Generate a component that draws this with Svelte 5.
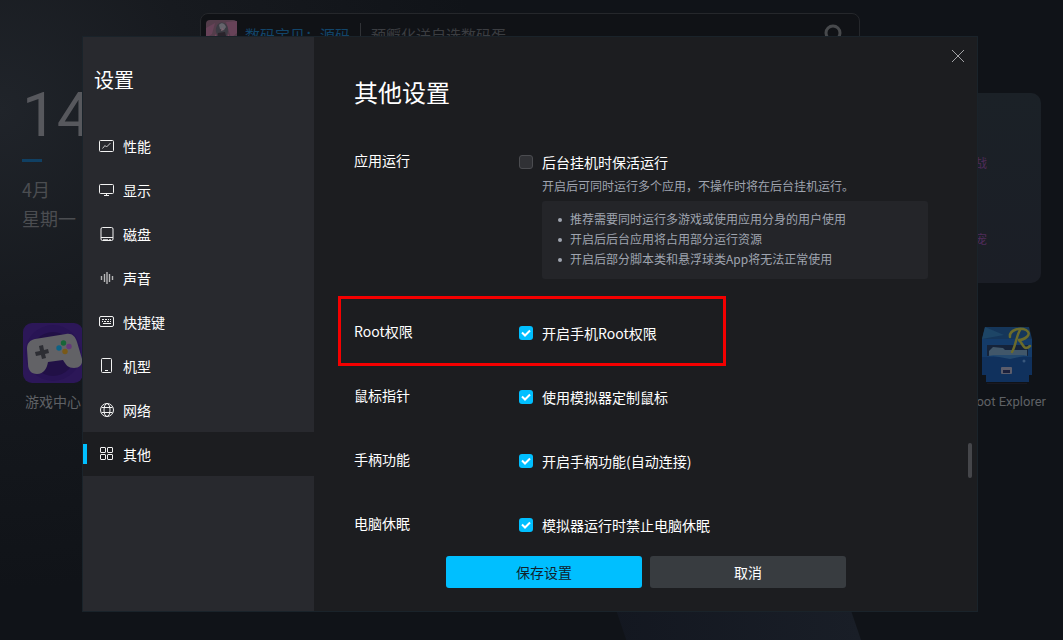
<script lang="ts">
    let active = $state("other");

    const menu = [
        { id: "performance", label: "性能" },
        { id: "display", label: "显示" },
        { id: "disk", label: "磁盘" },
        { id: "sound", label: "声音" },
        { id: "hotkey", label: "快捷键" },
        { id: "model", label: "机型" },
        { id: "network", label: "网络" },
        { id: "other", label: "其他" },
    ];

    let settings = $state([
        {
            id: "keepalive",
            title: "应用运行",
            option: "后台挂机时保活运行",
            checked: false,
            hint: "开启后可同时运行多个应用，不操作时将在后台挂机运行。",
            notes: [
                "推荐需要同时运行多游戏或使用应用分身的用户使用",
                "开启后后台应用将占用部分运行资源",
                "开启后部分脚本类和悬浮球类App将无法正常使用",
            ],
        },
        { id: "root", title: "Root权限", option: "开启手机Root权限", checked: true, marked: true },
        { id: "cursor", title: "鼠标指针", option: "使用模拟器定制鼠标", checked: true },
        { id: "gamepad", title: "手柄功能", option: "开启手柄功能(自动连接)", checked: true },
        { id: "sleep", title: "电脑休眠", option: "模拟器运行时禁止电脑休眠", checked: true },
    ]);
</script>

{#snippet icon(id)}
    <svg class="icon" viewBox="0 0 16 16" width="16" height="16" aria-hidden="true">
        {#if id === "performance"}
            <rect x="0.5" y="2.5" width="14" height="11" rx="1" />
            <path d="M3.5 10.5 6 7.5 7.5 9 11.5 5" stroke-width="0.8" />
        {:else if id === "display"}
            <rect x="0.5" y="2.5" width="14" height="9" rx="1" />
            <path d="M7.5 11.5v2M5 13.5h5" />
        {:else if id === "disk"}
            <rect x="2" y="1.5" width="12" height="13" rx="1.5" />
            <path d="M2 11.5h12" />
            <path d="M4 13.5h5M10 13.5h2" stroke-width="0.7" />
        {:else if id === "sound"}
            <path d="M2.5 6v4M5.5 4v8M8 2v12M10.5 4v8M13.5 6v4" stroke-width="1.4" opacity="0.7" />
        {:else if id === "hotkey"}
            <rect x="0.5" y="2.5" width="14" height="10" rx="1.5" />
            <path d="M3 5.5h2M6 5.5h2M9 5.5h1M11 5.5h1M3 7.5h1M5 7.5h2M8 7.5h2M11 7.5h1M4 9.5h8" />
        {:else if id === "model"}
            <rect x="2.5" y="0.5" width="10" height="14" rx="1" />
            <path d="M6 12.5h3" />
        {:else if id === "network"}
            <circle cx="8" cy="8" r="6.5" />
            <ellipse cx="8" cy="8" rx="3" ry="6.5" />
            <path d="M2.5 5.5h11M2.5 10.5h11" />
        {:else}
            <rect x="1.5" y="1.5" width="5" height="5" rx="0.5" />
            <rect x="8.5" y="1.5" width="5" height="5" rx="0.5" />
            <rect x="1.5" y="8.5" width="5" height="5" rx="0.5" />
            <rect x="8.5" y="8.5" width="5" height="5" rx="0.5" />
        {/if}
    </svg>
{/snippet}

<div class="desktop">
    <div class="searchBar">
        <svg class="avatar" viewBox="0 0 31 31" width="31" height="31" aria-hidden="true">
            <rect width="31" height="31" rx="4" fill="#543d4b" />
            <path d="M0 8 9 3 6 14 0 18zM20 2l11-1v12l-6 5z" fill="#674258" />
            <path d="M2 25 10 14l3 14zM22 14l8 12-9 2z" fill="#764860" />
            <path d="M10 12C9 5 14 1 18 3c5 2 5 9 2 14l-7 1z" fill="#3b3b43" />
            <path d="M13 5c2-3 6-2 7 2l-2 3-4-1z" fill="#65646c" />
            <path d="m12 13 7-1 2 8-10 1z" fill="#29232b" />
            <path d="m16 7 2 3-3 1z" fill="#7b6470" />
        </svg>
        <span class="adName">数码宝贝：源码</span>
        <span class="adText">预孵化送自选数码蛋</span>
        <svg class="magnifier" viewBox="0 0 24 24" width="24" height="24" aria-hidden="true">
            <circle cx="12" cy="10" r="7" />
            <path d="m17 15 6 6" />
        </svg>
    </div>

    <div class="date">
        <div class="day">14</div>
        <div class="dash"></div>
        <div>4月</div>
        <div>星期一</div>
    </div>

    <div class="card">
        <span>战</span>
        <span>宠</span>
    </div>

    <div class="shortcut games">
        <svg viewBox="0 0 60 60" width="60" height="60" aria-hidden="true">
            <rect width="60" height="60" rx="9" fill="#2c1758" />
            <circle cx="30" cy="30" r="28" fill="#281454" />
            <circle cx="30" cy="31" r="22" fill="#211046" />
            <path
                d="M12 16 43 11c6-1 9 2 11 8l5 17c1 6-3 9-8 9-6 0-8-3-11-8l-15 2c-1 6-4 12-11 12-6 0-9-4-9-10L4 26c0-6 3-9 8-10z"
                fill="#626266"
            />
            <path d="m16 23 4-1 1 5 4-1 1 4-4 1 1 4-4 1-1-4-5 1-1-4 5-1z" fill="#2d2e34" />
            <circle cx="40.5" cy="20" r="2.7" fill="#176638" />
            <circle cx="46" cy="23.5" r="2.7" fill="#643879" />
            <circle cx="36" cy="25" r="2.7" fill="#0d6285" />
            <circle cx="42" cy="28.5" r="2.7" fill="#795918" />
        </svg>
        <span>游戏中心</span>
    </div>

    <div class="shortcut explorer">
        <svg viewBox="0 0 60 60" width="60" height="60" aria-hidden="true">
            <path d="M8 3h44l3 12H5z" fill="#15365a" />
            <path d="m8 3 19 8-22 4z" fill="#1d4566" />
            <path d="M5 15h50v36h-3v7H9v-7H5z" fill="#143b69" />
            <path d="M5 33h50v18h-3v7H9v-7H5z" fill="#10315d" />
            <path d="M10 21h41v11H10z" fill="#15233a" />
            <path d="m12 27 4-4 10 1 2 2h22v6H12z" fill="#41576a" />
            <path d="M11 31h40l-18 4z" fill="#24496e" />
            <rect x="24" y="43" width="11" height="7" rx="1" fill="#5c5d6b" />
            <path d="M26 46h7v3h-7z" fill="#1b203c" />
            <circle cx="47" cy="37" r="1.5" fill="#38577c" />
            <path
                d="M33 13c-1-7 10-10 16-7 7 4-1 10-8 10 3 0 5 8 8 8 2 0 3-1 4-2M43 6c-4 7-4 15-8 22"
                fill="none"
                stroke="#6b6b2b"
                stroke-width="2.5"
                stroke-linecap="round"
            />
            <path d="M10 60h40" stroke="#24212b" />
        </svg>
        <span>Root Explorer</span>
    </div>

    <div class="dialog" role="dialog" aria-labelledby="pageTitle">
        <nav class="sidebar">
            <h1>设置</h1>
            {#each menu as item (item.id)}
                <button
                    class={["menuItem", active === item.id ? "active" : ""]}
                    onclick={() => (active = item.id)}
                >
                    {@render icon(item.id)}
                    {item.label}
                </button>
            {/each}
        </nav>

        <main>
            <button class="close" aria-label="关闭">
                <svg viewBox="0 0 14 14" width="14" height="14">
                    <path d="m1 1 12 12M13 1 1 13" />
                </svg>
            </button>
            <h2 id="pageTitle">其他设置</h2>

            <div class="settings">
                {#each settings as item (item.id)}
                    <section class={["setting", item.marked ? "marked" : ""]}>
                        <h3>{item.title}</h3>
                        <div>
                            <label>
                                <input type="checkbox" bind:checked={item.checked} />
                                {item.option}
                            </label>
                            {#if item.hint}
                                <p class="hint">{item.hint}</p>
                            {/if}
                            {#if item.notes}
                                <ul class="notes">
                                    {#each item.notes as note}
                                        <li>{note}</li>
                                    {/each}
                                </ul>
                            {/if}
                        </div>
                    </section>
                {/each}
            </div>

            <div class="actions">
                <button class="save">保存设置</button>
                <button class="cancel">取消</button>
            </div>
            <div class="scrollThumb"></div>
        </main>
    </div>
</div>

<style>
    :global(body) {
        background: #101317;
    }

    .desktop {
        position: relative;
        display: grid;
        box-sizing: border-box;
        min-height: 100vh;
        padding: 37px 86px 29px 83px;
        overflow: hidden;
        font-family: "Noto Sans CJK SC", sans-serif;
        font-size: 14px;
        color: #ffffff;
        background:
            radial-gradient(circle at 0 110px, #20242a 0, #171a1f 200px, transparent 480px),
            #101318;
    }

    /* slanted stripe of the wallpaper */
    .desktop::before {
        content: "";
        position: absolute;
        bottom: 0;
        left: 57%;
        width: 24%;
        height: 60px;
        background: linear-gradient(90deg, #131720, #191e27);
        clip-path: polygon(0 0, 92% 0, 100% 100%, 8% 100%);
    }

    .searchBar {
        position: absolute;
        top: 13px;
        left: 200px;
        right: 203px;
        display: flex;
        align-items: center;
        box-sizing: border-box;
        height: 44px;
        padding: 0 14px 0 5px;
        border: 1px solid #25272b;
        border-radius: 8px;
        font-size: 15px;
        line-height: 24px;
        color: #3b3d41;
        background: #101216;
    }

    .adName {
        margin-left: 8px;
        padding-right: 10px;
        color: #12456a;
    }

    .adText {
        padding-left: 10px;
        border-left: 1px solid #303236;
    }

    .magnifier {
        margin-left: auto;
        fill: none;
        stroke: #47494c;
        stroke-width: 3;
    }

    .date {
        position: absolute;
        top: 79px;
        left: 22px;
        font-size: 18px;
        line-height: 29px;
        color: #4b4d51;
    }

    .day {
        font-family: Roboto, sans-serif;
        font-size: 62px;
        line-height: 72px;
        color: #57585d;
    }

    .dash {
        width: 20px;
        height: 3px;
        margin: 8px 0 13px;
        background: #104063;
    }

    .card {
        position: absolute;
        top: 93px;
        right: 22px;
        display: flex;
        flex-direction: column;
        gap: 56px;
        box-sizing: border-box;
        width: 240px;
        height: 190px;
        padding: 60px 54px 0 0;
        border-radius: 10px;
        text-align: right;
        font-size: 12px;
        line-height: 20px;
        color: #4f2b5a;
        background: linear-gradient(#1b2127, #1b1e26);
    }

    .shortcut {
        position: absolute;
        top: 323px;
        display: flex;
        flex-direction: column;
        align-items: center;
        gap: 8px;
        line-height: 20px;
        color: #5f6165;
    }

    .games {
        left: 23px;
    }

    .explorer {
        top: 324px;
        right: 17px;
        font-family: Roboto, sans-serif;
        font-size: 13px;
    }

    .dialog {
        position: relative;
        display: grid;
        grid-template-columns: 231px 1fr;
        background: #1c1d20;
        box-shadow: 0 0 0 1px #1a232a;
    }

    .sidebar {
        background: #28292e;
    }

    h1,
    h2,
    h3 {
        margin: 0;
        font-weight: 400;
    }

    h1 {
        padding: 29px 11px 30px;
        font-size: 20px;
        line-height: 28px;
    }

    button {
        padding: 0;
        border: none;
        background: none;
        color: inherit;
        font: inherit;
        cursor: pointer;
    }

    .menuItem {
        position: relative;
        display: flex;
        align-items: center;
        gap: 8px;
        width: 100%;
        height: 44px;
        padding-left: 16px;
    }

    .menuItem.active {
        background: #1c1d20;
    }

    .menuItem.active::before {
        content: "";
        position: absolute;
        left: 0;
        width: 4px;
        height: 20px;
        background: #00bfff;
    }

    .icon {
        fill: none;
        stroke: #f2f2f2;
    }

    main {
        position: relative;
        display: flex;
        flex-direction: column;
        padding: 39px 49px 23px 40px;
    }

    h2 {
        font-size: 24px;
        line-height: 32px;
    }

    .close {
        position: absolute;
        top: 12px;
        right: 12px;
        width: 14px;
        height: 14px;
    }

    .close svg {
        display: block;
        stroke: #a2a3a6;
    }

    .settings {
        display: flex;
        flex-direction: column;
        gap: 40px;
        margin-top: 42px;
    }

    .setting {
        position: relative;
        display: grid;
        grid-template-columns: 165px 1fr;
    }

    .setting.marked::after {
        content: "";
        position: absolute;
        inset: -25px auto -21px -16px;
        box-sizing: border-box;
        width: 388px;
        border: 3px solid #f40000;
        pointer-events: none;
    }

    h3 {
        font-size: 14px;
        line-height: 20px;
    }

    label {
        display: flex;
        gap: 9px;
        line-height: 24px;
    }

    input {
        appearance: none;
        box-sizing: border-box;
        width: 14px;
        height: 14px;
        margin: 5px 0 0;
        border: 1px solid #4b4c50;
        border-radius: 3px;
        background: #303135;
    }

    input:checked {
        border: none;
        background: #00bfff
            url("data:image/svg+xml,%3Csvg xmlns='http://www.w3.org/2000/svg' viewBox='0 0 14 14'%3E%3Cpath d='M3 6.5 6 9.5 11 4.5' fill='none' stroke='white' stroke-width='2'/%3E%3C/svg%3E");
    }

    .hint {
        margin: 2px 0 5px 23px;
        font-size: 12px;
        line-height: 20px;
        color: #9fa4af;
    }

    .notes {
        margin: 0 0 2px 23px;
        padding: 8px 12px 10px 28px;
        border-radius: 3px;
        font-size: 12px;
        line-height: 20px;
        color: #9fa4af;
        background: #242529;
        list-style: none;
    }

    .notes li {
        position: relative;
    }

    .notes li::before {
        content: "";
        position: absolute;
        top: 9px;
        left: -12px;
        width: 4px;
        height: 4px;
        border-radius: 50%;
        background: #9fa4af;
    }

    .actions {
        display: flex;
        justify-content: center;
        gap: 8px;
        margin: auto -10px 0 0;
        padding-top: 18px;
    }

    .actions button {
        width: 196px;
        height: 32px;
        border-radius: 3px;
    }

    .actions .save {
        background: #00bfff;
        color: #10222c;
    }

    .actions .cancel {
        background: #383c40;
    }

    .scrollThumb {
        position: absolute;
        top: 406px;
        right: 5px;
        width: 4px;
        height: 35px;
        border-radius: 2px;
        background: #45464a;
    }
</style>
